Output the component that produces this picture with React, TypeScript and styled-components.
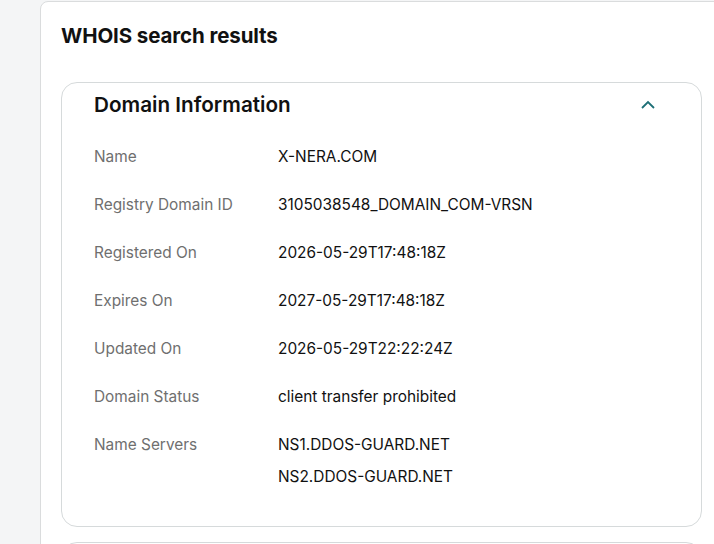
import styled, { createGlobalStyle } from "styled-components";

const GlobalStyle = createGlobalStyle`
  html, body {
    margin: 0;
    padding: 0;
    background: #f4f5f6;
    overflow: hidden;
  }
  body {
    font-family: "Inter", "Liberation Sans", sans-serif;
    color: #111111;
  }
`;

const Page = styled.div`
  box-sizing: border-box;
  width: 714px;
  height: 544px;
  overflow: hidden;
  padding-left: 40px;
`;

const Panel = styled.section`
  box-sizing: border-box;
  width: 683px;
  height: 600px;
  margin-top: 1px;
  background: #ffffff;
  border: 1px solid #dadcdd;
  border-radius: 8px;
  padding: 18px 20px 0 20px;
`;

const PageTitle = styled.h2`
  margin: 0 0 30px 0;
  font-size: 20.5px;
  line-height: 32px;
  font-weight: 700;
  letter-spacing: -0.1px;
`;

const Card = styled.div`
  box-sizing: border-box;
  background: #ffffff;
  border: 1px solid #d6dadb;
  border-radius: 16px;
  padding: 8px 33px 25px 32px;
`;

const CardHeader = styled.div`
  display: flex;
  align-items: center;
  justify-content: space-between;
  height: 28px;
  margin-bottom: 14px;
`;

const CardTitle = styled.h3`
  margin: 0;
  font-size: 20.7px;
  line-height: 28px;
  font-weight: 600;
`;

const Toggle = styled.button`
  display: flex;
  align-items: center;
  justify-content: center;
  width: 24px;
  height: 24px;
  margin-right: 8px;
  padding: 0;
  border: 0;
  background: none;
  color: #1d6f76;
`;

const Row = styled.div`
  display: grid;
  grid-template-columns: 184px 1fr;
  padding: 12px 0;
  font-size: 15.4px;
  line-height: 24px;
`;

const Label = styled.div`
  color: #6f6f6f;
`;

const Values = styled.div`
  display: flex;
  flex-direction: column;
  gap: 8px;
  color: #111111;
`;

const NextCard = styled(Card)`
  margin-top: 15px;
  height: 60px;
`;

const rows: [string, string[]][] = [
  ["Name", ["X-NERA.COM"]],
  ["Registry Domain ID", ["3105038548_DOMAIN_COM-VRSN"]],
  ["Registered On", ["2026-05-29T17:48:18Z"]],
  ["Expires On", ["2027-05-29T17:48:18Z"]],
  ["Updated On", ["2026-05-29T22:22:24Z"]],
  ["Domain Status", ["client transfer prohibited"]],
  ["Name Servers", ["NS1.DDOS-GUARD.NET", "NS2.DDOS-GUARD.NET"]],
];

export default function App() {
  return (
    <>
      <GlobalStyle />
      <Page>
        <Panel>
          <PageTitle>WHOIS search results</PageTitle>
          <Card>
            <CardHeader>
              <CardTitle>Domain Information</CardTitle>
              <Toggle aria-label="Collapse">
                <svg width="16" height="16" viewBox="0 0 16 16" fill="none">
                  <path d="M2 11l6-6 6 6" stroke="currentColor" strokeWidth="1.8" />
                </svg>
              </Toggle>
            </CardHeader>
            {rows.map(([label, values]) => (
              <Row key={label}>
                <Label>{label}</Label>
                <Values>
                  {values.map((v) => (
                    <span key={v}>{v}</span>
                  ))}
                </Values>
              </Row>
            ))}
          </Card>
          <NextCard />
        </Panel>
      </Page>
    </>
  );
}
